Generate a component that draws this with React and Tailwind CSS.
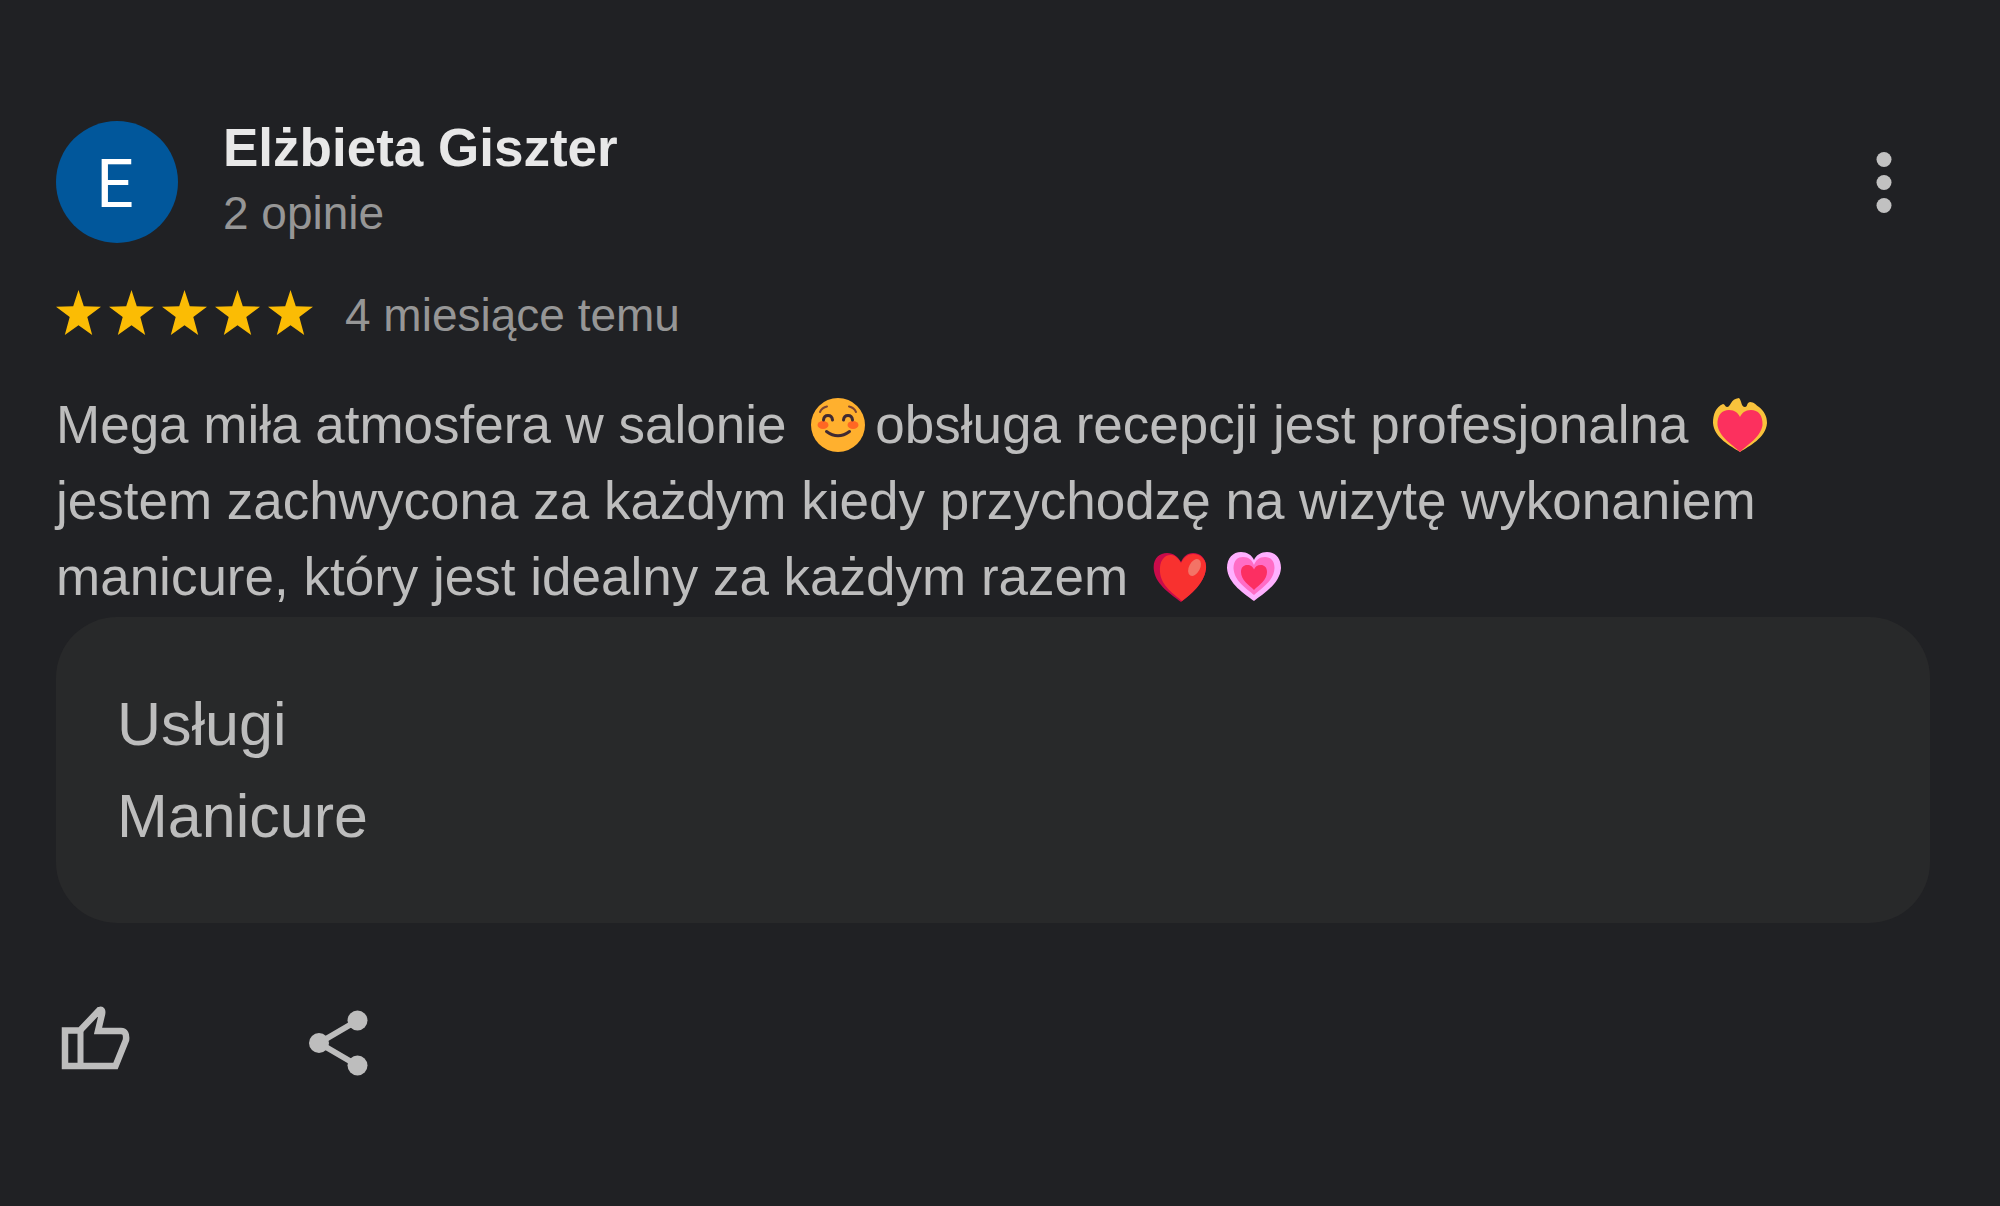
import React from "react";

function Star() {
  return (
    <svg viewBox="0 0 46 51" className="h-[50px] w-[45px]" fill="#fbbc04" aria-hidden="true">
      <path d="M23 0 L28.4 16.6 L46 17 L32 27.6 L37 46 L23 36 L9 46 L14 27.6 L0 17 L17.6 16.6 Z" />
    </svg>
  );
}

function Emoji({ label, children }) {
  return (
    <svg
      viewBox="0 0 54 54"
      role="img"
      aria-label={label}
      className="mx-2.5 inline-block size-[54px] align-[-9px]"
    >
      {children}
    </svg>
  );
}

function SmileEmoji() {
  return (
    <Emoji label="😊">
      <circle cx="27" cy="27" r="27" fill="#ffb02e" />
      <ellipse cx="12" cy="27" rx="5.5" ry="4" fill="#ff6723" />
      <ellipse cx="42" cy="27" rx="5.5" ry="4" fill="#ff6723" />
      <g fill="none" stroke="#402a32" strokeLinecap="round">
        <path d="M12.5 22 Q13 17.5 17 17.5 Q21 17.5 21.5 22" strokeWidth="3" />
        <path d="M32.5 22 Q33 17.5 37 17.5 Q41 17.5 41.5 22" strokeWidth="3" />
        <path d="M15.5 33.5 Q27 42 38.5 33.5" strokeWidth="3" />
      </g>
      <g fill="none" stroke="#7d4533" strokeWidth="2" strokeLinecap="round">
        <path d="M9 14 Q11 9.5 16 8.5" />
        <path d="M45 14 Q43 9.5 38 8.5" />
      </g>
    </Emoji>
  );
}

function FireHeartEmoji() {
  return (
    <Emoji label="❤️‍🔥">
      <path
        d="M27 54 C18 48 1 40 0 25 C0 16 3 9 10 6 C12 6 12 9 14 9 C18 9 17 1 26 0 C29 3 28 9 32 9 C35 9 33 5 37 4 C41 4 43 7 46 9 C51 13 54 18 54 25 C53 40 36 48 27 54 Z"
        fill="#f9c23c"
      />
      <path
        d="M27 54 C20 47 6 39 4.500 27 C4 17 9 12 16 12 C22 12 25 15 27 19 C29 15 32 12 38 12 C45 12 50 17 49.500 27 C48 39 34 47 27 54 Z"
        fill="#fc305e"
      />
    </Emoji>
  );
}

function RedHeartEmoji() {
  return (
    <Emoji label="❤️">
      <path
        d="M28 52 C19 45 3 35 1 21 C-1 9 6 3 14 3 C21 3 25 7 28 12 C30 7 34 3 40 3 C48 3 54 9 53 19 C51 34 37 45 28 52 Z"
        fill="#ca0b4a"
      />
      <path
        d="M29 51 C21 44 8 36 7 22 C6 10 12 4 19 5 C23 6 26 9 28 13 C31 7 35 4 40 4 C48 4 54 10 53 19 C51 34 38 44 29 51 Z"
        fill="#f8312f"
      />
      <ellipse cx="41.5" cy="17.5" rx="5.5" ry="9" transform="rotate(28 41.5 17.5)" fill="#f37366" />
    </Emoji>
  );
}

function GrowingHeartEmoji() {
  return (
    <Emoji label="💗">
      <path
        d="M27 51 C18 44 1 34 0 18 C0 8 6 2 14 2 C20 2 25 5 27 10 C29 5 34 2 40 2 C48 2 54 8 54 18 C53 34 36 44 27 51 Z"
        fill="#ffb0ff"
      />
      <path
        d="M27 45 C19 38 7 31 6.5 18 C6.5 10 11 7 16 7 C22 7 25 10 27 15 C29 10 32 7 38 7 C43 7 47.5 10 47.5 18 C47 31 35 38 27 45 Z"
        fill="#ff6dc6"
      />
      <path
        d="M27 40 C22 35 14 30 14 22 C14 17 17 15 20 15 C24 15 26 17 27 19.5 C28 17 30 15 34 15 C37 15 40 17 40 22 C40 30 32 35 27 40 Z"
        fill="#fc2f62"
      />
    </Emoji>
  );
}

function ThumbIcon() {
  return (
    <svg viewBox="0 0 72 66" className="h-[66px] w-[72px]" fill="none" stroke="#bdbdbd" aria-hidden="true">
      <path
        d="M5 25.5 H20 L39.500 5 Q43 4 42 9 L38 26 H61 Q67 26 66 35 L55.500 61 H5 Z"
        strokeWidth="6.5"
      />
      <path d="M20.5 25 V61" strokeWidth="6" />
    </svg>
  );
}

function ShareIcon() {
  return (
    <svg viewBox="0 -5 60 71" className="h-[71px] w-[60px]" fill="#bdbdbd" aria-hidden="true">
      <path d="M11 33 L49.5 10.5 M11 33 L49.5 55.5" stroke="#bdbdbd" strokeWidth="6" />
      <circle cx="11" cy="33" r="10" />
      <circle cx="49.5" cy="10.5" r="10" />
      <circle cx="49.5" cy="55.5" r="10" />
    </svg>
  );
}

function MoreIcon() {
  return (
    <svg viewBox="0 0 16 64" className="h-16 w-4" fill="#c1c1c1" aria-hidden="true">
      <circle cx="8" cy="9.5" r="7.5" />
      <circle cx="8" cy="32.5" r="7.5" />
      <circle cx="8" cy="55.5" r="7.5" />
    </svg>
  );
}

export default function App() {
  return (
    <main
      lang="pl"
      className="min-h-screen bg-[#202124] pt-[121px] pr-[70px] pb-16 pl-14 font-['Liberation_Sans',Arial,sans-serif] text-[#bdbdbd]"
    >
      <article>
        <header className="flex items-center justify-between">
          <div className="flex items-start gap-[45px]">
            <div className="flex size-[122px] items-center justify-center rounded-full bg-[#01579b] pt-1 pr-1 font-[Roboto,sans-serif] text-[66px] text-white">
              E
            </div>
            <div>
              <h1 className="text-[53px] leading-[54px] font-bold text-[#e8e8e8]">Elżbieta Giszter</h1>
              <p className="mt-3 text-[46px] leading-[52px] text-[#969696]">2 opinie</p>
            </div>
          </div>
          <button type="button" aria-label="Więcej opcji" className="mr-[38px]">
            <MoreIcon />
          </button>
        </header>

        <div className="mt-[42px] flex items-center gap-8">
          <div role="img" aria-label="5 na 5 gwiazdek" className="flex gap-2">
            <Star />
            <Star />
            <Star />
            <Star />
            <Star />
          </div>
          <p className="text-[46px] leading-[60px] text-[#969696]">4 miesiące temu</p>
        </div>

        <p className="mt-[42px] text-[53px] leading-[76px]">
          Mega miła atmosfera w salonie <SmileEmoji />
          obsługa recepcji jest profesjonalna <FireHeartEmoji /> jestem zachwycona za każdym kiedy przychodzę na wizytę
          wykonaniem manicure, który jest idealny za każdym razem <RedHeartEmoji />
          <GrowingHeartEmoji />
        </p>

        <dl className="mt-0.5 rounded-[61px] bg-[#28292a] p-[61px] text-[61px] leading-[92px]">
          <dt>Usługi</dt>
          <dd>Manicure</dd>
        </dl>

        <footer className="mt-[82px] flex items-start gap-44 pl-1">
          <button type="button" aria-label="Lubię to">
            <ThumbIcon />
          </button>
          <button type="button" aria-label="Udostępnij">
            <ShareIcon />
          </button>
        </footer>
      </article>
    </main>
  );
}
